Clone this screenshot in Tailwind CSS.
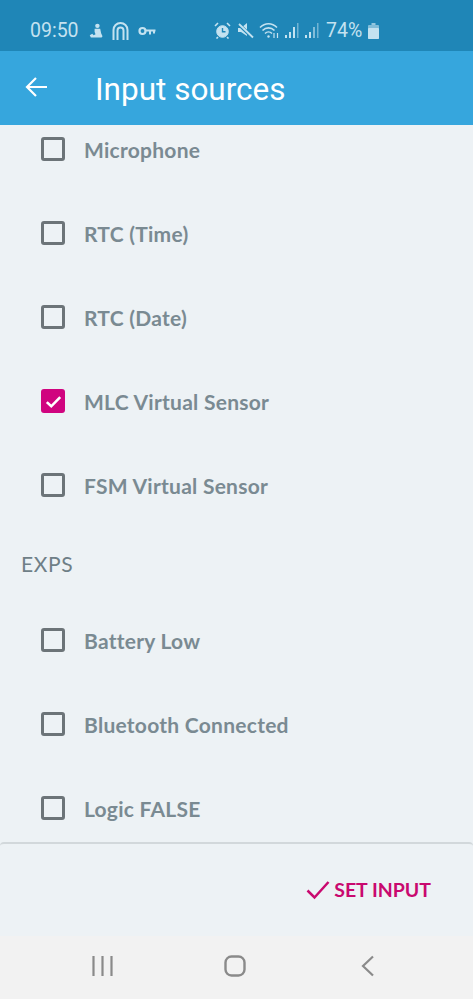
<!DOCTYPE html>
<html lang="en">
<head>
    <meta charset="UTF-8">
    <meta name="viewport" content="width=device-width, initial-scale=1.0">
    <title>Input sources</title>
    <script src="https://cdn.jsdelivr.net/npm/@tailwindcss/browser@4"></script>
</head>
<body class="bg-[#edf2f5] h-[999px] w-[473px] overflow-hidden flex flex-col font-['Lato',sans-serif]">
    <!-- status bar -->
    <div class="h-[51px] bg-[#1f86b7] flex items-center text-[#c4e2f0] pl-[30px] font-['Roboto',sans-serif] shrink-0">
        <span class="text-[19.5px] w-[48px] mt-[10px]">09:50</span>
        <div class="flex items-center gap-[9px] ml-[11px] mt-[10px]">
            <svg width="14" height="16" viewBox="0 0 15 17" fill="#c4e2f0"><circle cx="9" cy="3" r="2.400"/><path d="M6 6h6l1 5 1.500 3-1 1.500H2L.8 13l2.700-1.500 1.500 1.500 2-1-1-2.500z"/></svg>
            <svg width="17" height="20" viewBox="0 0 17 20" fill="none" stroke="#c4e2f0" stroke-width="2"><path d="M1.500 19V9a7 7 0 0 1 14 0v10"/><path d="M5.500 19V9.500a3 3 0 0 1 6 0V19"/></svg>
            <svg width="18" height="10" viewBox="0 0 18 10" fill="none" stroke="#c4e2f0"><circle cx="4.500" cy="5" r="3" stroke-width="2.200"/><path d="M7 4.500h10.500M12 4.500v4M16 4.500v3" stroke-width="2"/></svg>
        </div>
        <div class="flex items-center ml-[58px] mt-[10px]">
            <svg width="17" height="17" viewBox="0 0 17 17" fill="none" stroke="#c4e2f0"><circle cx="8.500" cy="9.500" r="5.800" fill="#c4e2f0"/><path d="M8.500 6v3.800h3" stroke="#1f86b7" stroke-width="1.400"/><path d="M1 4l3-3M16 4l-3-3M4 15l-1.500 1.500M13 15l1.500 1.500" stroke-width="1.600"/></svg>
            <svg class="ml-[6px]" width="17" height="17" viewBox="0 0 17 17" fill="#c4e2f0"><path d="M1 6h3l6-5v13l-6-4H1z"/><path d="M1.500 2l14 13.500" stroke="#1f86b7" stroke-width="3.500"/><path d="M2 2l14 13.500" stroke="#c4e2f0" stroke-width="1.800"/></svg>
            <svg class="ml-[5px]" width="21" height="17" viewBox="0 0 21 17" fill="none" stroke="#c4e2f0" stroke-width="1.600"><path d="M1 5.500c5-5 12-5 17 0M3.500 8.500c3.500-3.500 8.500-3.500 12 0M6 11.500c2-2 5-2 7 0"/><circle cx="9.500" cy="14.500" r="1.200" fill="#c4e2f0" stroke="none"/><path d="M15 11v5M18.500 11v5" stroke-width="1.200"/></svg>
            <svg class="ml-[4px]" width="16" height="17" viewBox="0 0 16 17" fill="#c4e2f0"><rect x="1" y="13" width="2" height="3"/><rect x="5" y="10" width="2" height="6"/><rect x="9" y="5" width="2" height="11"/><rect x="13" y="1" width="1.500" height="15" opacity=".5"/></svg>
            <svg class="ml-[4px]" width="16" height="17" viewBox="0 0 16 17" fill="#c4e2f0"><rect x="1" y="13" width="2" height="3"/><rect x="5" y="10" width="2" height="6"/><rect x="9" y="5" width="2" height="11" opacity=".6"/><rect x="13" y="1" width="1.500" height="15" opacity=".5"/></svg>
            <span class="text-[19.5px] ml-[6px]">74%</span>
            <svg class="ml-[6px]" width="11" height="16" viewBox="0 0 11 16" fill="#c4e2f0"><rect x="3.500" y="0" width="4" height="2" opacity=".7"/><rect x="0" y="2" width="11" height="14" rx="1" opacity=".6"/><rect x="0" y="5" width="11" height="11" rx="1"/></svg>
        </div>
    </div>

    <!-- header -->
    <div class="h-[74px] bg-[#36a6dd] flex items-center text-white shrink-0">
        <svg class="ml-[25px] mb-[3px]" width="22" height="22" viewBox="0 0 22 22" fill="none" stroke="#fff" stroke-width="2.200"><path d="M22 11H2M11 2l-9 9 9 9"/></svg>
        <h1 class="ml-[48px] text-[31.5px] font-['Roboto',sans-serif] font-normal mt-[3px]">Input sources</h1>
    </div>

    <!-- list -->
    <div class="flex-1 overflow-hidden min-h-0">
        <div class="mt-[-17px] text-[21px] font-bold text-[#7a8a92] tracking-[0.26px]">
            <div class="h-[84px] flex items-center pl-[41px] gap-[19px]"><span class="w-[24px] h-[24px] mb-[2px] rounded-[3px] border-[3px] border-[#6c7478]"></span>Microphone</div>
            <div class="h-[84px] flex items-center pl-[41px] gap-[19px]"><span class="w-[24px] h-[24px] mb-[2px] rounded-[3px] border-[3px] border-[#6c7478]"></span>RTC (Time)</div>
            <div class="h-[84px] flex items-center pl-[41px] gap-[19px]"><span class="w-[24px] h-[24px] mb-[2px] rounded-[3px] border-[3px] border-[#6c7478]"></span>RTC (Date)</div>
            <div class="h-[84px] flex items-center pl-[41px] gap-[19px]">
                <span class="w-[24px] h-[24px] mb-[2px] rounded-[3px] bg-[#d0047f] flex items-center justify-center">
                    <svg width="19" height="19" viewBox="0 0 17 17" fill="none" stroke="#fff" stroke-width="2.300"><path d="M2.500 9l4 3.800 8-8.300"/></svg>
                </span>MLC Virtual Sensor
            </div>
            <div class="h-[84px] flex items-center pl-[41px] gap-[19px]"><span class="w-[24px] h-[24px] mb-[2px] rounded-[3px] border-[3px] border-[#6c7478]"></span>FSM Virtual Sensor</div>
            <div class="h-[71px] flex items-center pl-[21px] font-normal text-[21px] text-[#6f7f87] tracking-[0.6px]">EXPS</div>
            <div class="h-[84px] flex items-center pl-[41px] gap-[19px]"><span class="w-[24px] h-[24px] mb-[2px] rounded-[3px] border-[3px] border-[#6c7478]"></span>Battery Low</div>
            <div class="h-[84px] flex items-center pl-[41px] gap-[19px]"><span class="w-[24px] h-[24px] mb-[2px] rounded-[3px] border-[3px] border-[#6c7478]"></span>Bluetooth Connected</div>
            <div class="h-[84px] flex items-center pl-[41px] gap-[19px]"><span class="w-[24px] h-[24px] mb-[2px] rounded-[3px] border-[3px] border-[#6c7478]"></span>Logic FALSE</div>
        </div>
    </div>

    <!-- footer -->
    <div class="h-[94px] shrink-0 border-t-2 border-[#d2d8db] rounded-t-[4px] flex items-center justify-end pr-[42px] bg-[#edf2f5]">
        <svg width="24" height="20" viewBox="0 0 24 20" fill="none" stroke="#c9096f" stroke-width="2.500"><path d="M1.500 10.500l7 7L22.500 2"/></svg>
        <span class="ml-[4px] text-[19.5px] font-bold text-[#c9096f]">SET INPUT</span>
    </div>

    <!-- nav bar -->
    <div class="h-[63px] shrink-0 bg-[#f2f2f2] flex items-center pl-[92px] pb-[3px]">
        <svg width="21" height="20" viewBox="0 0 21 20" fill="none" stroke="#8a8a8a" stroke-width="2.200"><path d="M1.500 0v20M10.500 0v20M19.500 0v20"/></svg>
        <svg class="ml-[111px]" width="22" height="22" viewBox="0 0 22 22" fill="none" stroke="#8a8a8a" stroke-width="2.400"><rect x="1.500" y="1.500" width="19" height="19" rx="6"/></svg>
        <svg class="ml-[114px]" width="14" height="22" viewBox="0 0 14 22" fill="none" stroke="#8a8a8a" stroke-width="2.200"><path d="M13 1.500L3 11l10 9.500"/></svg>
    </div>
</body>
</html>
